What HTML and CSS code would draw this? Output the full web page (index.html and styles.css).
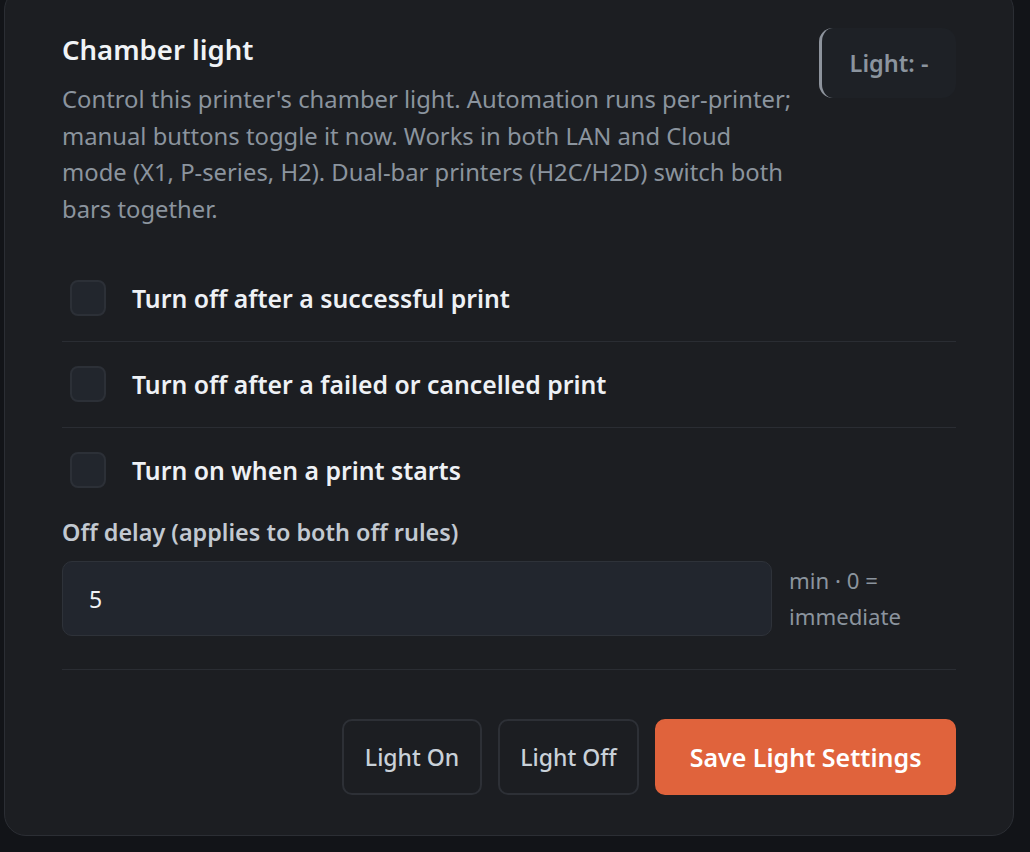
FILE: index.html
```html
<!DOCTYPE html>
<html lang="en">
<head>
<meta charset="utf-8">
<title>Chamber light</title>
<link rel="stylesheet" href="styles.css">
</head>
<body>
<section class="card">
  <header class="card-head">
    <div class="head-text">
      <h2 class="title">Chamber light</h2>
      <p class="desc">Control this printer's chamber light. Automation runs per-printer; manual buttons toggle it now. Works in both LAN and Cloud mode (X1, P-series, H2). Dual-bar printers (H2C/H2D) switch both bars together.</p>
    </div>
    <div class="badge">Light: -</div>
  </header>

  <ul class="rules">
    <li class="rule"><span class="check"></span><span class="rule-label">Turn off after a successful print</span></li>
    <li class="rule"><span class="check"></span><span class="rule-label">Turn off after a failed or cancelled print</span></li>
    <li class="rule"><span class="check"></span><span class="rule-label">Turn on when a print starts</span></li>
  </ul>

  <div class="field">
    <label class="field-label">Off delay (applies to both off rules)</label>
    <div class="field-row">
      <div class="input">5</div>
      <span class="hint">min · 0 = immediate</span>
    </div>
  </div>

  <footer class="actions">
    <button class="btn">Light On</button>
    <button class="btn">Light Off</button>
    <button class="btn primary">Save Light Settings</button>
  </footer>
</section>
</body>
</html>
```
FILE: styles.css
```css
* { box-sizing: border-box; }
html, body { margin: 0; padding: 0; }
body {
  background: #121418;
  font-family: "Noto Sans", "Open Sans", sans-serif;
  height: 852px;
  overflow: hidden;
}
.card {
  margin: -12px 0 0 4px;
  width: 1010px;
  background: #1c1e22;
  border: 1px solid #2b2e34;
  border-radius: 22px;
  padding: 39px 57px 40px;
}
.card-head {
  display: flex;
  align-items: flex-start;
  justify-content: space-between;
}
.head-text { width: 740px; }
.title {
  margin: 4px 0 0;
  font-size: 27.5px;
  line-height: 36px;
  font-weight: 600;
  color: #f0f3f6;
}
.desc {
  margin: 13px 0 0;
  font-size: 23.8px;
  line-height: 36.5px;
  color: #8b949e;
}
.badge {
  width: 137px;
  height: 70px;
  display: flex;
  align-items: center;
  justify-content: center;
  background: #1e2126;
  border-left: 3px solid #8d939c;
  border-radius: 14px;
  color: #8b949e;
  font-size: 23.5px;
  font-weight: 600;
}
.rules {
  list-style: none;
  margin: 29px 0 0;
  padding: 0;
}
.rule {
  display: flex;
  align-items: center;
  gap: 26px;
  padding: 24px 8px 25px;
  border-bottom: 1px solid #2a2d33;
}
.rule:last-child { border-bottom: none; }
.check {
  width: 36px;
  height: 36px;
  flex: none;
  border: 2px solid #2c3037;
  border-radius: 8px;
  background: #22262d;
}
.rule-label {
  font-size: 24.8px;
  font-weight: 600;
  color: #eef1f5;
}
.field { margin-top: 3px; }
.field-label {
  display: block;
  font-size: 23.4px;
  line-height: 33px;
  font-weight: 600;
  color: #c2c9d1;
}
.field-row {
  display: flex;
  align-items: center;
  gap: 17px;
  margin-top: 12px;
  padding-bottom: 33px;
  border-bottom: 1px solid #2a2d33;
}
.input {
  width: 710px;
  height: 75px;
  display: flex;
  align-items: center;
  padding: 0 26px;
  background: #22262e;
  border: 1.5px solid #2e3239;
  border-radius: 10px;
  color: #f0f3f6;
  font-size: 23px;
}
.hint {
  width: 160px;
  font-size: 22.2px;
  line-height: 36px;
  color: #8b949e;
}
.actions {
  display: flex;
  justify-content: flex-end;
  gap: 16px;
  margin-top: 49px;
}
.btn {
  height: 76px;
  padding: 0 20.5px;
  background: #1c1e22;
  border: 2px solid #2d3036;
  border-radius: 10px;
  color: #c9d1d9;
  font-family: inherit;
  font-size: 23px;
  font-weight: 500;
}
.btn.primary {
  background: #e0633c;
  border-color: #e0633c;
  color: #ffffff;
  font-size: 25px;
  font-weight: 600;
  padding: 0 32.5px;
}
```
